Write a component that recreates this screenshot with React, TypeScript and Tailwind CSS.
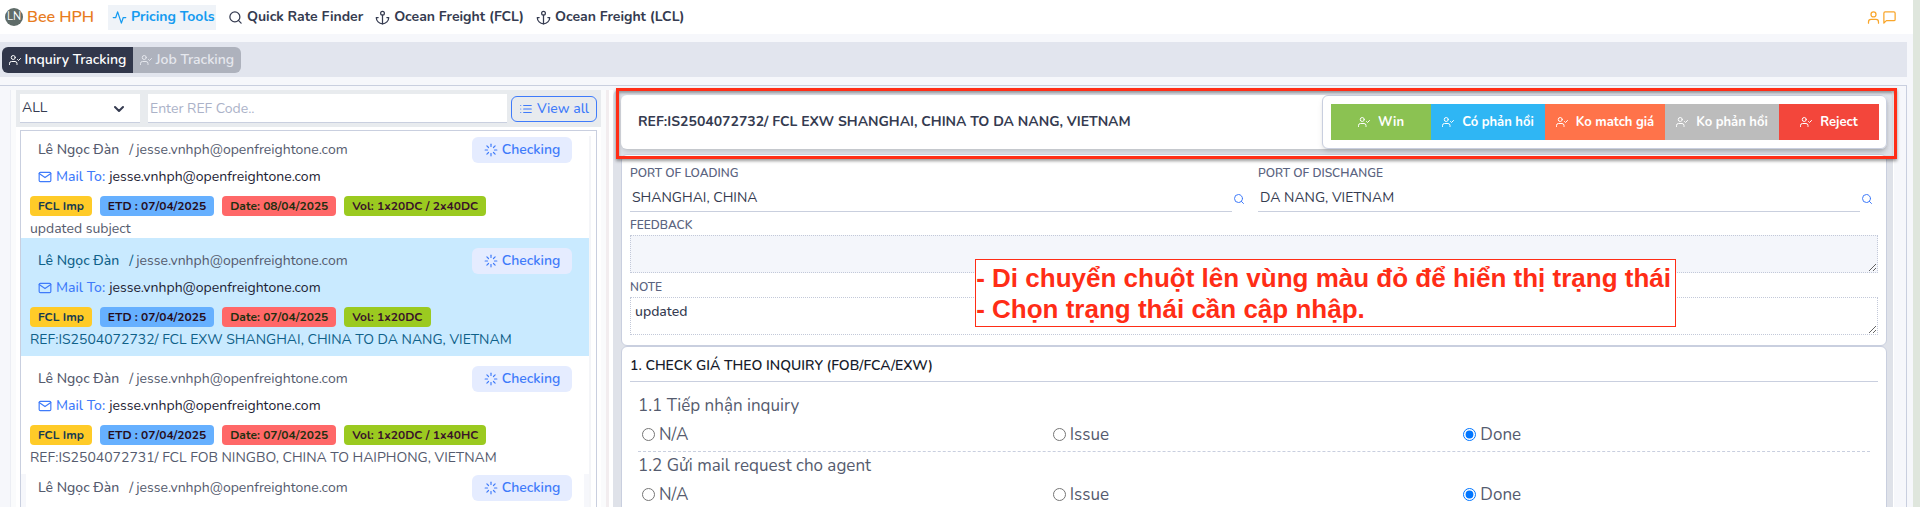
import { useState } from 'react';
import {
  FiActivity,
  FiAnchor,
  FiList,
  FiLoader,
  FiMail,
  FiMessageSquare,
  FiSearch,
  FiUser,
  FiUserCheck,
} from 'react-icons/fi';

type Inquiry = {
  id: number;
  type: string;
  etd: string;
  date: string;
  volume: string;
  subject: string;
  compact?: boolean;
};

const inquiries: Inquiry[] = [
  { id: 1, type: 'FCL Imp', etd: '07/04/2025', date: '08/04/2025', volume: '1x20DC / 2x40DC', subject: 'updated subject', compact: true },
  { id: 2, type: 'FCL Imp', etd: '07/04/2025', date: '07/04/2025', volume: '1x20DC', subject: 'REF:IS2504072732/ FCL EXW SHANGHAI, CHINA TO DA NANG, VIETNAM' },
  { id: 3, type: 'FCL Imp', etd: '07/04/2025', date: '07/04/2025', volume: '1x20DC / 1x40HC', subject: 'REF:IS2504072731/ FCL FOB NINGBO, CHINA TO HAIPHONG, VIETNAM' },
  { id: 4, type: 'FCL Imp', etd: '07/04/2025', date: '07/04/2025', volume: '1x20DC', subject: 'updated subject', compact: true },
];

const statuses = [
  { label: 'Win', className: 'w-[100px] bg-[#8bc252]' },
  { label: 'Có phản hồi', className: 'w-[114px] bg-[#2fb6f4]' },
  { label: 'Ko match giá', className: 'w-[120px] bg-[#ff734a]' },
  { label: 'Ko phản hồi', className: 'w-[114px] bg-[#bcbcbc]' },
  { label: 'Reject', className: 'w-[100px] bg-[#f3463b]' },
];

const steps = ['1.1 Tiếp nhận inquiry', '1.2 Gửi mail request cho agent'];

function InquiryItem({ item, selected, onSelect }: { item: Inquiry; selected: boolean; onSelect: () => void }) {
  return (
    <li
      onClick={onSelect}
      className={`px-[9px] last:border-x-[5px] last:border-[#f6f7fb] last:px-1 ${item.compact ? 'pt-px' : 'pt-[10px] pb-[7px]'} ${
        selected ? 'bg-[#c9eaff] text-[#0f6189]' : 'bg-white text-[#555b6e]'
      }`}
    >
      <div className="flex h-[26px] items-center px-2">
        <span className="font-medium">Lê Ngọc Đàn</span>
        <span className="ml-[10px]">/</span>
        <span className="ml-[3px] flex-1 text-[#555b6e]">jesse.vnhph@openfreightone.com</span>
        <button className="flex h-[26px] w-[100px] items-center justify-center gap-1 rounded-md bg-[#e5ecff] font-semibold text-[#3f7bfa]">
          <FiLoader size={14} />
          Checking
        </button>
      </div>
      <div className="flex h-7 items-center gap-1 pl-2">
        <FiMail size={14} className="text-[#3f7bfa]" />
        <span className="font-medium text-[#3f7bfa]">Mail To:</span>
        <span className="text-[#1d2233]">jesse.vnhph@openfreightone.com</span>
      </div>
      <div className="mt-[5px] flex h-5 gap-2 text-xs leading-5 font-bold">
        <span className="rounded bg-[#ffcb28] px-2 text-[#173b50]">{item.type}</span>
        <span className="rounded bg-[#66b0ff] px-2 text-[#260d1c]">ETD : {item.etd}</span>
        <span className="rounded bg-[#ff6868] px-2 text-[#1f3010]">Date: {item.date}</span>
        <span className="rounded bg-[#9bca20] px-2 text-[#3a1329]">Vol: {item.volume}</span>
      </div>
      <div className="mt-1 leading-[18px]">{item.subject}</div>
    </li>
  );
}

function PortField({ id, label, value }: { id: string; label: string; value: string }) {
  return (
    <div>
      <label htmlFor={id} className="block text-xs leading-4 font-semibold text-[#5b6480]">{label}</label>
      <div className="mt-1 flex items-center pr-[5px]">
        <input
          id={id}
          defaultValue={value}
          className="h-[27px] min-w-0 flex-1 border-b border-[#c9cfde] px-[2px] pb-[2px] outline-none"
        />
        <button aria-label="Search port" className="pl-px text-[#3f7bfa]">
          <FiSearch size={12} />
        </button>
      </div>
    </div>
  );
}

export default function App() {
  const [selected, setSelected] = useState(2);

  return (
    <div className="flex h-screen flex-col overflow-hidden border-r-[7px] border-[#dfe6dd] bg-[#f6f7fb] font-[Nunito,Lato,sans-serif] text-[14px] leading-5 text-[#353b50]">
      <header className="flex h-[34px] shrink-0 items-center bg-white pr-4 pl-[5px] font-bold">
        <span className="flex size-[18px] items-center justify-center rounded-full bg-[#5f6c69] text-[11px] font-normal text-white">LN</span>
        <span className="ml-1 w-[81px] text-base font-semibold text-[#e87c1e]">Bee HPH</span>
        <nav className="flex items-center gap-3">
          <a href="#pricing" className="flex h-[25px] w-[108px] items-center gap-1 bg-[#eff3f8] pl-1 text-[#159bf0]">
            <FiActivity size={15} />
            Pricing Tools
          </a>
          <a href="#rates" className="flex items-center gap-1">
            <FiSearch size={15} />
            Quick Rate Finder
          </a>
          <a href="#fcl" className="flex items-center gap-1">
            <FiAnchor size={15} />
            Ocean Freight (FCL)
          </a>
          <a href="#lcl" className="flex items-center gap-1">
            <FiAnchor size={15} />
            Ocean Freight (LCL)
          </a>
        </nav>
        <div className="ml-auto flex gap-px text-[#f9a62b]">
          <button aria-label="Account"><FiUser size={15} /></button>
          <button aria-label="Messages"><FiMessageSquare size={15} /></button>
        </div>
      </header>

      <div className="mt-2 mr-[6px] flex h-[35px] shrink-0 items-center bg-[#e2e5ee] pl-[2px] font-semibold">
        <button className="flex h-[26px] w-[131px] items-center justify-center gap-1 rounded-l-md bg-[#31374b] text-white">
          <FiUserCheck size={12} />
          Inquiry Tracking
        </button>
        <button className="flex h-[26px] w-[108px] items-center justify-center gap-1 rounded-r-md bg-[#aeb2bd] text-[#e6e8ee]">
          <FiUserCheck size={12} />
          Job Tracking
        </button>
      </div>

      <main className="mt-2 mr-[6px] flex min-h-0 flex-1 border-t border-r border-[#c9cfdf] pt-1 pr-3">
        {/* Inquiry list */}
        <section className="ml-[10px] flex w-[596px] shrink-0 flex-col border-l border-[#eceef4] bg-[#fafbfc] pr-[5px] pl-[5px]">
          <div className="flex min-h-0 flex-1 flex-col bg-white">
            <div className="flex h-[37px] shrink-0 items-center bg-[#e8ebee] pr-1 pl-1">
              <div className="relative">
                <select aria-label="Status" className="h-[29px] w-[120px] appearance-none border-b border-[#c9cfdf] bg-white px-[2px] outline-none">
                  <option>ALL</option>
                </select>
                <svg className="pointer-events-none absolute top-[11px] right-4 h-2 w-[10px]" viewBox="0 0 10 8" fill="none" stroke="currentColor" strokeWidth="2" strokeLinecap="round" strokeLinejoin="round">
                  <path d="M1 2l4 4 4-4" />
                </svg>
              </div>
              <input
                aria-label="REF code"
                placeholder="Enter REF Code.."
                className="ml-2 h-[29px] min-w-0 flex-1 border-b border-[#c9cfdf] bg-white px-[2px] outline-none placeholder:text-[#abb2c8]"
              />
              <button className="ml-1 flex h-[26px] w-[86px] items-center justify-center gap-1 rounded-md border border-[#3f7bfa] font-medium text-[#3f7bfa]">
                <FiList size={14} />
                View all
              </button>
            </div>
            <div className="mx-1 mt-[3px] min-h-0 flex-1 overflow-hidden border border-b-0 border-[#c9cfdf] pt-[5px] pr-[5px]">
              <ul className="border-r-2 border-[#f4f5f8]">
                {inquiries.map((item) => (
                  <InquiryItem key={item.id} item={item} selected={item.id === selected} onSelect={() => setSelected(item.id)} />
                ))}
              </ul>
            </div>
          </div>
        </section>
        <div className="w-[7px] shrink-0 border-r-4 border-l-[3px] border-r-white border-l-[#f2edef]" />

        {/* Inquiry detail */}
        <section className="relative min-w-0 flex-1 rounded-t-md border-r border-white bg-[#dfe2e9] pt-[5px] pr-[6px] pl-2">
          <div className="flex h-[54px] items-center rounded-md bg-white pl-[17px] shadow-md">
            <h1 className="flex-1 font-bold">REF:IS2504072732/ FCL EXW SHANGHAI, CHINA TO DA NANG, VIETNAM</h1>
            <div className="flex h-[54px] items-center rounded-md border border-[#c9cfdf] bg-white pr-[7px] pl-2 shadow-md">
              {statuses.map((status) => (
                <button key={status.label} className={`flex h-9 items-center justify-center gap-2 text-[13px] font-bold text-white ${status.className}`}>
                  <FiUserCheck size={12} />
                  {status.label}
                </button>
              ))}
            </div>
          </div>
          <div className="pointer-events-none absolute -top-[2px] -right-1 left-[3px] h-[71px] border-[3px] border-[#ff2d16] shadow-[0_2px_3px_rgba(0,0,0,0.4),inset_0_2px_3px_rgba(0,0,0,0.35)]" />

          <div className="mt-[5px] rounded-md border border-[#c9cfdf] bg-white px-2 pt-[10px] pb-[10px]">
            <div className="grid grid-cols-2 gap-2">
              <PortField id="pol" label="PORT OF LOADING" value="SHANGHAI, CHINA" />
              <PortField id="pod" label="PORT OF DISCHANGE" value="DA NANG, VIETNAM" />
            </div>
            <label htmlFor="feedback" className="mt-[5px] block text-xs leading-4 font-semibold text-[#5b6480]">FEEDBACK</label>
            <textarea id="feedback" className="mt-[2px] block h-[38px] w-full border border-dotted border-[#c3c9d9] bg-[#f4f6fb] px-1 py-1 outline-none" />
            <label htmlFor="note" className="mt-[6px] block text-xs leading-4 font-semibold text-[#5b6480]">NOTE</label>
            <textarea id="note" defaultValue="updated" className="mt-[2px] block h-[38px] w-full border border-dotted border-[#c3c9d9] px-1 py-1 font-medium outline-none" />
          </div>

          <div className="rounded-t-md border border-[#c9cfdf] bg-white px-2 pt-[9px]">
            <h2 className="border-b border-[#c9cfdf] pb-[5px] font-semibold text-[#171b2b]">1. CHECK GIÁ THEO INQUIRY (FOB/FCA/EXW)</h2>
            <div className="px-2 pt-[10px] text-[17px] text-[#555b6e]">
              {steps.map((step, i) => (
                <fieldset key={step} className="border-b border-dashed border-[#c9cfdf] pb-px">
                  <legend className="leading-7">{step}</legend>
                  <div className="grid grid-cols-3">
                    {['N/A', 'Issue', 'Done'].map((option) => (
                      <label key={option} className="flex h-[30px] items-center gap-1 pl-1">
                        <input type="radio" name={`step-${i}`} defaultChecked={option === 'Done'} className="mb-[2px] size-[13px]" />
                        {option}
                      </label>
                    ))}
                  </div>
                </fieldset>
              ))}
            </div>
          </div>

          {/* Usage note over the form */}
          <div className="absolute top-[169px] right-[217px] border border-[#ff2d16] bg-white pt-[3px] pr-1 pb-px font-[Helvetica,'Liberation_Sans',sans-serif] text-[26px] leading-[31px] font-bold whitespace-nowrap text-[#ff2d16]">
            <p>- Di chuyển chuột lên vùng màu đỏ để hiển thị trạng thái</p>
            <p>- Chọn trạng thái cần cập nhập.</p>
          </div>
        </section>
      </main>
    </div>
  );
}
